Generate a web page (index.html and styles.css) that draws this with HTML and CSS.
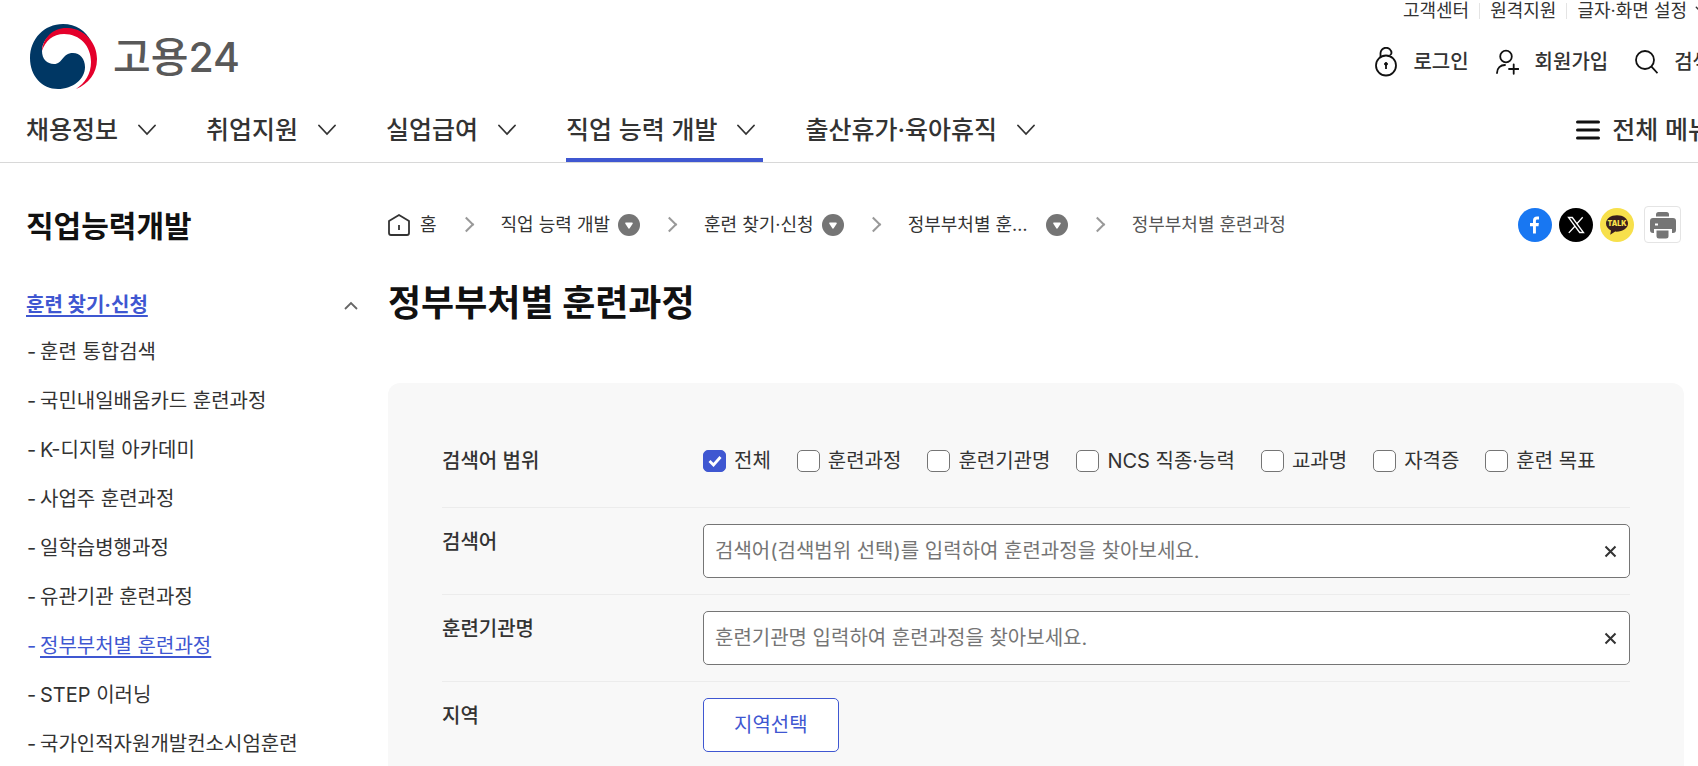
FILE: index.html
```html
<!DOCTYPE html>
<html lang="ko">
<head>
  <meta charset="UTF-8" />
  <meta name="viewport" content="width=device-width, initial-scale=1.0"/>
  <title>정부부처별 훈련과정 - 고용24</title>
  <link rel="stylesheet" href="styles.css">
</head>
<body>
  <!-- shared icons -->
  <svg class="sprite" aria-hidden="true">
    <symbol id="chevron-down" viewBox="0 0 18 12"><path d="M1 1.5 9 10 17 1.5" fill="none" stroke="currentColor" stroke-width="1.8" stroke-linecap="round"/></symbol>
    <symbol id="more" viewBox="0 0 22 22"><circle cx="11" cy="11" r="11" fill="#757575"/><path d="M8 9.200h6L11 13.800z" fill="#fff" stroke="#fff" stroke-width="1.6" stroke-linejoin="round"/></symbol>
    <symbol id="close" viewBox="0 0 13 13"><path d="M1.5 1.5l10 10M11.5 1.5l-10 10" stroke="currentColor" stroke-width="2"/></symbol>
  </svg>

  <header class="header">
    <div class="header-inner">
      <div class="header-top">
        <a class="logo" href="#">
          <svg width="67" height="65" viewBox="0 0 67 65" aria-hidden="true">
            <path d="M33 0C14 0 0 15 0 34c0 18 12 31 28 31 15 0 27-10 27-22 0-8-5-14-12-14-11 0-10 11-19 11-7 0-12-5-12-13C12 15 23 6 36 5c11-1 20 5 25 12C56 7 46 0 33 0z" fill="#003764"/>
            <path d="M12 27C13 13 24 3 38 4c17 1 29 15 29 31 0 15-9 25-21 30 9-6 15-15 15-27 0-16-11-28-27-28-11 0-19 7-22 17z" fill="#e4002b"/>
          </svg>
          <span>고용24</span>
        </a>
        <div class="header-side">
          <ul class="util">
            <li><a href="#">고객센터</a></li>
            <li><a href="#">원격지원</a></li>
            <li><button type="button">글자·화면 설정 <svg width="16" height="10"><use href="#chevron-down"/></svg></button></li>
          </ul>
          <ul class="member">
            <li><a href="#">
              <svg width="22" height="30" viewBox="0 0 22 30" fill="none" stroke="#111" stroke-width="1.8"><circle cx="11" cy="18.5" r="10"/><path d="M5.500 9.800V6.500a5.500 5.500 0 0 1 11-.5q0 1.200-1 1.500" stroke-linecap="round"/><path d="M11 17v5"/><circle cx="11" cy="17" r="1.4" fill="#111" stroke-width="1"/></svg>
              로그인</a></li>
            <li><a href="#">
              <svg width="23" height="26" viewBox="0 0 23 26" fill="none" stroke="#111" stroke-width="1.8" stroke-linecap="round"><circle cx="10" cy="7.500" r="5.8"/><path d="M1 24c0-5 3.500-8 8-8M13 20h9.500M17.700 15.300v9.500"/></svg>
              회원가입</a></li>
            <li><button type="button">
              <svg width="23" height="24" viewBox="0 0 23 24" fill="none" stroke="#111" stroke-width="1.8"><circle cx="10" cy="10" r="9"/><path d="M16.500 16.700l6 6.500"/></svg>
              검색</button></li>
          </ul>
        </div>
      </div>
      <nav class="gnb">
        <ul>
          <li><a href="#">채용정보 <svg width="18" height="12"><use href="#chevron-down"/></svg></a></li>
          <li><a href="#">취업지원 <svg width="18" height="12"><use href="#chevron-down"/></svg></a></li>
          <li><a href="#">실업급여 <svg width="18" height="12"><use href="#chevron-down"/></svg></a></li>
          <li><a class="active" href="#">직업 능력 개발 <svg width="18" height="12"><use href="#chevron-down"/></svg></a></li>
          <li><a href="#">출산휴가·육아휴직 <svg width="18" height="12"><use href="#chevron-down"/></svg></a></li>
        </ul>
        <button type="button" class="all-menu">
          <svg width="24" height="20" viewBox="0 0 24 20" stroke="#111" stroke-width="3" stroke-linecap="round"><path d="M1.500 2h21M1.500 10h21M1.500 18h21"/></svg>
          전체 메뉴
        </button>
      </nav>
    </div>
  </header>

  <div class="page">
    <aside class="sidebar">
      <h2>직업능력개발</h2>
      <a class="side-group" href="#"><span>훈련 찾기·신청</span>
        <svg width="14" height="9" viewBox="0 0 14 9"><path d="M1 8l6-6 6 6" fill="none" stroke="#666" stroke-width="1.8"/></svg>
      </a>
      <ul class="side-list">
        <li><a href="#">훈련 통합검색</a></li>
        <li><a href="#">국민내일배움카드 훈련과정</a></li>
        <li><a href="#">K-디지털 아카데미</a></li>
        <li><a href="#">사업주 훈련과정</a></li>
        <li><a href="#">일학습병행과정</a></li>
        <li><a href="#">유관기관 훈련과정</a></li>
        <li class="active"><a href="#">정부부처별 훈련과정</a></li>
        <li><a href="#">STEP 이러닝</a></li>
        <li><a href="#">국가인적자원개발컨소시엄훈련</a></li>
      </ul>
    </aside>

    <main class="content">
      <div class="content-head">
        <ol class="breadcrumb">
          <li><a class="home" href="#">
            <svg width="22" height="22" viewBox="0 0 22 22" fill="none" stroke="#333" stroke-width="1.8" stroke-linejoin="round"><path d="M1 7 11 1l10 6v12q0 2-2 2H3q-2 0-2-2zM11 11v5"/></svg>
            홈</a></li>
          <li><a href="#">직업 능력 개발</a><button type="button" aria-label="직업 능력 개발 목록"><svg width="22" height="22"><use href="#more"/></svg></button></li>
          <li><a href="#">훈련 찾기·신청</a><button type="button" aria-label="훈련 찾기 목록"><svg width="22" height="22"><use href="#more"/></svg></button></li>
          <li><a class="cut" href="#">정부부처별 훈련과정</a><button type="button" aria-label="훈련과정 목록"><svg width="22" height="22"><use href="#more"/></svg></button></li>
          <li class="current">정부부처별 훈련과정</li>
        </ol>
        <div class="share">
          <a href="#" aria-label="페이스북"><svg width="34" height="34" viewBox="0 0 34 34"><circle cx="17" cy="17" r="17" fill="#1877f2"/><path d="M15 25.500v-7.200h-3v-3.300h3v-2.300c0-3 1.600-4.300 4.100-4.300.9 0 1.600.1 1.900.2v2.900h-1.500c-1.300 0-1.600.7-1.600 1.600V15h3l-.4 3.300h-2.600v7.200z" fill="#fff"/></svg></a>
          <a href="#" aria-label="X"><svg width="34" height="34" viewBox="0 0 34 34"><circle cx="17" cy="17" r="17" fill="#000"/><path d="M9.500 9.500h3.800l11.200 15h-3.800zM23.700 9.300l-6.300 6.900M15.900 18.200l-6.100 6.700" fill="none" stroke="#fff" stroke-width="1.300"/></svg></a>
          <a href="#" aria-label="카카오톡"><svg width="34" height="34" viewBox="0 0 34 34"><circle cx="17" cy="17" r="17" fill="#f7e04b"/><path d="M17 7.300c-6.200 0-11 3.500-11 8.200 0 3 2 5.500 5 6.900l-.8 4.300 5-3.100c7.300.4 12.800-3.300 12.800-8.100 0-4.700-4.800-8.200-11-8.200z" fill="#371d1e"/><text x="17" y="18" text-anchor="middle" class="talk">TALK</text></svg></a>
          <button type="button" class="print" aria-label="인쇄">
            <svg width="28" height="28" viewBox="0 0 28 28" fill="#757575"><path d="M7 5.500V3.500Q7 1 9.500 1h8Q20 1 20 3.500v2z"/><path d="M4 7h20q3 0 3 3v9q0 3-3 3h-1v-4H5v4H4q-3 0-3-3v-9q0-3 3-3z"/><path d="M7.500 19.500h12V25q0 2.500-2.500 2.500h-7q-2.500 0-2.500-2.500z"/><path d="M6 12.500h3v2H6z" fill="#fff"/></svg>
          </button>
        </div>
      </div>

      <h1>정부부처별 훈련과정</h1>

      <form class="search-box" onsubmit="return false">
        <div class="row row-scope" role="group" aria-labelledby="scopeLabel">
          <span class="row-label" id="scopeLabel">검색어 범위</span>
          <div class="checks">
            <label><input type="checkbox" checked>전체</label>
            <label><input type="checkbox">훈련과정</label>
            <label><input type="checkbox">훈련기관명</label>
            <label><input type="checkbox">NCS 직종·능력</label>
            <label><input type="checkbox">교과명</label>
            <label><input type="checkbox">자격증</label>
            <label><input type="checkbox">훈련 목표</label>
          </div>
        </div>
        <div class="row">
          <label class="row-label" for="keyword">검색어</label>
          <div class="field">
            <input type="text" id="keyword" placeholder="검색어(검색범위 선택)를 입력하여 훈련과정을 찾아보세요.">
            <button type="button" aria-label="검색어 지우기"><svg width="13" height="13"><use href="#close"/></svg></button>
          </div>
        </div>
        <div class="row">
          <label class="row-label" for="organ">훈련기관명</label>
          <div class="field">
            <input type="text" id="organ" placeholder="훈련기관명 입력하여 훈련과정을 찾아보세요.">
            <button type="button" aria-label="훈련기관명 지우기"><svg width="13" height="13"><use href="#close"/></svg></button>
          </div>
        </div>
        <div class="row">
          <span class="row-label">지역</span>
          <button type="button" class="region-btn">지역선택</button>
        </div>
      </form>
    </main>
  </div>
</body>
</html>
```
FILE: styles.css
```css
* {
  box-sizing: border-box;
}
body {
  margin: 0;
  overflow-x: hidden;
  background: #fff;
  color: #333;
  font-family: Inter, "Noto Sans CJK KR", sans-serif;
  font-size: 20px;
  line-height: 32px;
}
ul, ol {
  list-style: none;
  margin: 0;
  padding: 0;
}
h1, h2 {
  margin: 0;
  color: #111;
}
a {
  color: inherit;
  text-decoration: none;
}
button {
  font: inherit;
  color: inherit;
  background: none;
  border: 0;
  padding: 0;
  cursor: pointer;
}
svg {
  flex: none;
  display: block;
}
.sprite {
  display: none;
}

/* header */
.header {
  border-bottom: 1px solid #d8d8d8;
  overflow: hidden;
}
.header-inner {
  padding-left: 26px;
  margin-right: -13px;
}
.header-top {
  display: flex;
  justify-content: space-between;
  height: 97px;
}
.logo {
  display: flex;
  align-items: center;
  gap: 16px;
  padding: 24px 0 8px 4px;
  color: #595959;
  font-size: 41px;
  font-weight: 500;
}
.header-side {
  display: flex;
  flex-direction: column;
  align-items: flex-end;
  gap: 24px;
}
.util {
  display: flex;
  align-items: center;
  font-size: 18px;
  line-height: 22px;
}
.util li + li {
  display: flex;
  align-items: center;
}
.util li + li::before {
  content: "";
  width: 1px;
  height: 16px;
  margin: 0 10px;
  background: #e4e4e4;
}
.util button {
  display: flex;
  align-items: center;
  gap: 8px;
}
.member {
  display: flex;
  gap: 27px;
  font-weight: 500;
}
.member a, .member button {
  display: flex;
  align-items: center;
  gap: 16px;
  height: 32px;
}
.gnb {
  display: flex;
  justify-content: space-between;
  font-size: 25px;
  font-weight: 500;
}
.gnb ul {
  display: flex;
  gap: 42px;
}
.gnb a {
  display: flex;
  align-items: center;
  gap: 20px;
  height: 65px;
  padding-right: 8px;
  border-bottom: 4px solid transparent;
  border-top: 4px solid transparent;
}
.gnb a.active {
  border-bottom-color: #3f57d1;
}
.all-menu {
  display: flex;
  align-items: center;
  gap: 12px;
}

/* page */
.page {
  display: flex;
  gap: 30px;
  padding: 43px 14px 0 26px;
}
.sidebar {
  flex: none;
  width: 332px;
}
.sidebar h2 {
  font-size: 30px;
  line-height: 40px;
}
.side-group {
  display: flex;
  align-items: center;
  justify-content: space-between;
  margin: 43px 0 6px;
  color: #3f57d1;
  font-weight: 700;
}
.side-group span, .side-list .active a {
  text-decoration: underline 2px;
  text-underline-offset: 3px;
}
.side-list li {
  display: flex;
  height: 49px;
  align-items: center;
}
.side-list li::before {
  content: "-";
  width: 13px;
  padding-left: 1px;
}
.side-list .active {
  color: #3f57d1;
}

.content {
  flex: 1;
  min-width: 0;
}
.content-head {
  display: flex;
  align-items: center;
  justify-content: space-between;
  padding-right: 3px;
}
.breadcrumb {
  display: flex;
  align-items: center;
  font-size: 18px;
}
.breadcrumb li {
  display: flex;
  align-items: center;
  gap: 8px;
}
.breadcrumb li + li::before {
  content: "";
  width: 9px;
  height: 9px;
  margin: 0 21px 0 24px;
  border: solid #999;
  border-width: 2px 2px 0 0;
  transform: rotate(45deg);
}
.breadcrumb .home {
  display: flex;
  align-items: center;
  gap: 10px;
}
.breadcrumb .cut {
  width: 130px;
  overflow: hidden;
  white-space: nowrap;
  text-overflow: ellipsis;
}
.breadcrumb .current {
  color: #555;
}
.share {
  display: flex;
  align-items: center;
  gap: 7px;
}
.talk {
  font: 900 7px Inter, sans-serif;
  fill: #f7e04b;
}
.print {
  display: flex;
  align-items: center;
  justify-content: center;
  width: 37px;
  height: 37px;
  margin-left: 3px;
  border: 1px solid #e4e4e4;
  border-radius: 4px;
}
h1 {
  margin: 36px 0 56px;
  font-size: 36px;
  line-height: 48px;
}

/* search form */
.search-box {
  padding: 54px;
  border-radius: 12px;
  background: #f8f8f8;
}
.row {
  display: flex;
  align-items: flex-start;
  padding: 16px 0;
  border-bottom: 1px solid #ececec;
}
.row:last-child {
  border-bottom: 0;
}
.row-label {
  flex: none;
  width: 261px;
  padding-top: 2px;
  font-weight: 500;
}
.row-scope {
  padding: 8px 0 30px;
}
.row-scope .row-label {
  padding-top: 0;
}
.checks {
  display: flex;
  flex-wrap: wrap;
  gap: 0 26px;
}
.checks label {
  display: flex;
  align-items: center;
  gap: 8px;
}
.checks input {
  appearance: none;
  width: 23px;
  height: 22px;
  margin: 0;
  border: 1px solid #757575;
  border-radius: 5px;
  background: #fff;
}
.checks input:checked {
  border-color: #3f57d1;
  background: #3f57d1 url("data:image/svg+xml,%3Csvg xmlns='http://www.w3.org/2000/svg' viewBox='0 0 14 12'%3E%3Cpath d='M1.500 6l4 4 7-8' fill='none' stroke='white' stroke-width='2.800'/%3E%3C/svg%3E") center / 14px 12px no-repeat;
}
.field {
  display: flex;
  flex: 1;
  align-items: center;
  height: 54px;
  padding: 0 12px 0 11px;
  border: 1px solid #757575;
  border-radius: 5px;
  background: #fff;
}
.field input {
  flex: 1;
  min-width: 0;
  padding: 0;
  border: 0;
  outline: 0;
  background: none;
  font: inherit;
  color: #333;
}
.field input::placeholder {
  color: #757575;
}
.region-btn {
  height: 54px;
  padding: 0 30px;
  border: 1px solid #3f57d1;
  border-radius: 5px;
  background: #fff;
  color: #3f57d1;
}
```
